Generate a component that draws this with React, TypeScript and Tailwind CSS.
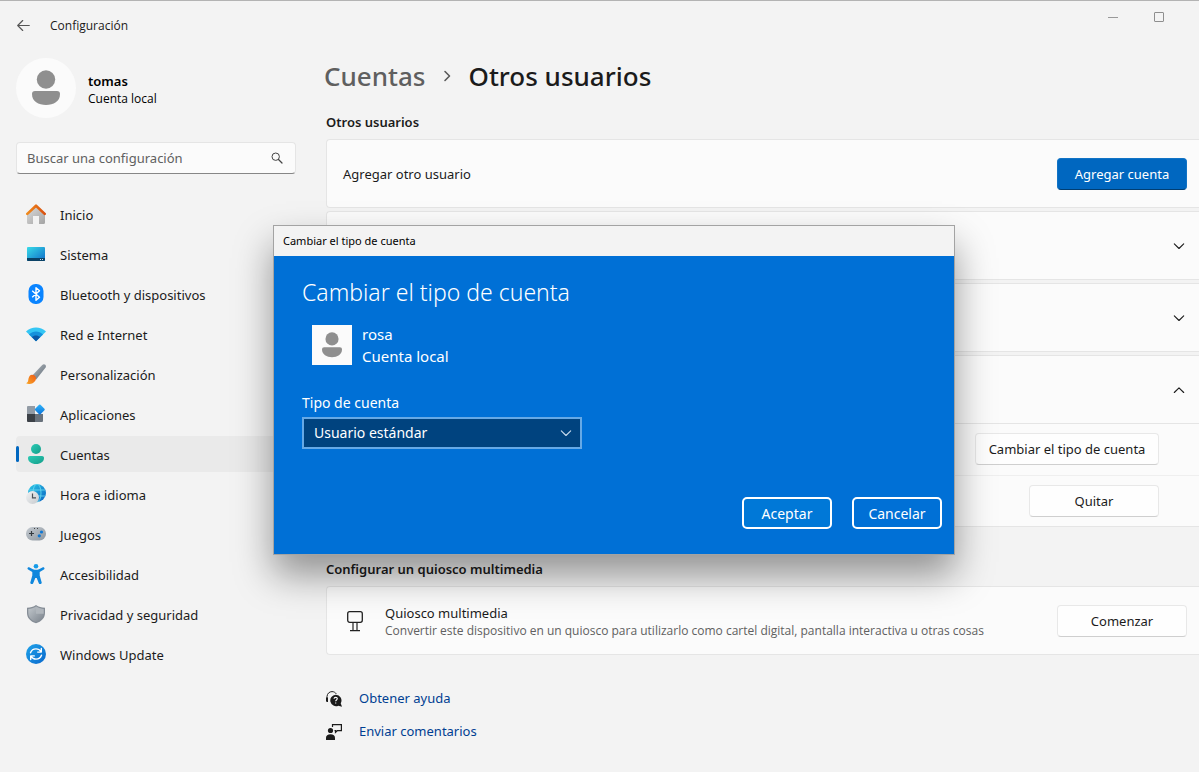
import { useState, type ReactNode } from 'react';

const svgProps = { width: 20, height: 20, viewBox: '0 0 20 20', fill: 'none', 'aria-hidden': true } as const;

function HomeIcon() {
  return (
    <svg {...svgProps}>
      <defs>
        <linearGradient id="homeWall" x1="0" y1="0" x2="1" y2="1"><stop stopColor="#dcdcdc" /><stop offset="1" stopColor="#a3a3a3" /></linearGradient>
        <linearGradient id="homeRoof" x1="0" y1="0" x2="1" y2="0"><stop stopColor="#f08a1c" /><stop offset="1" stopColor="#d9500f" /></linearGradient>
      </defs>
      <path d="M1 9.500 10 2l9 7.500V18.500a1.500 1.500 0 0 1-1.500 1.500H13v-8H7v8H2.500A1.500 1.500 0 0 1 1 18.500Z" fill="url(#homeWall)" />
      <path d="M1.300 9.900 10 1.700l8.700 8.200" stroke="url(#homeRoof)" strokeWidth="2.600" strokeLinecap="round" strokeLinejoin="round" />
    </svg>
  );
}

function SystemIcon() {
  return (
    <svg {...svgProps}>
      <defs><linearGradient id="screen" x1="0" y1="0" x2="1" y2="1"><stop stopColor="#38dbe8" /><stop offset="1" stopColor="#0f6cc8" /></linearGradient></defs>
      <rect x="1" y="3" width="18" height="14" rx="1" fill="url(#screen)" />
      <path d="M1 14h18v2a1 1 0 0 1-1 1H2a1 1 0 0 1-1-1Z" fill="#0b4266" />
      <path d="M14 15.500h1M16 15.500h1" stroke="#cde" strokeWidth="1" />
    </svg>
  );
}

function BluetoothIcon() {
  return (
    <svg {...svgProps}>
      <rect x="2.500" y="0" width="15" height="20" rx="7" fill="#0a84ff" />
      <path d="m6.200 6.700 7.300 6.500L10 16.300V3.700l3.500 3.100-7.300 6.500" stroke="#fff" strokeWidth="1.400" strokeLinejoin="round" />
    </svg>
  );
}

function WifiIcon() {
  return (
    <svg {...svgProps}>
      <path d="M0 7.500C5.500 2 14.500 2 20 7.500L10 17.200Z" fill="#34c6f4" />
      <path d="M3 10.400c4-3.900 10-3.900 14 0l-7 6.800Z" fill="#1591dc" />
      <path d="M5.800 13.100c2.400-2.300 6-2.300 8.400 0L10 17.200Z" fill="#0b57a6" />
    </svg>
  );
}

function BrushIcon() {
  return (
    <svg {...svgProps}>
      <defs>
        <linearGradient id="handle" x1="0" y1="0" x2="1" y2="1"><stop stopColor="#b5bcc2" /><stop offset="1" stopColor="#5f6a75" /></linearGradient>
        <linearGradient id="bristle" x1="0" y1="1" x2="1" y2="0"><stop stopColor="#f9a825" /><stop offset="1" stopColor="#ee5a17" /></linearGradient>
      </defs>
      <path d="M6.300 11.500 16 1.200C18-.800 20.900 1 19.600 3.400L10.200 15.500Z" fill="url(#handle)" />
      <path d="M6 10.700c2.500 0 4.300 1.800 4 4.100-.600 4.100-5.700 6.600-9.900 4.400 2.500-.900 1.900-2.600 2.500-4.900.500-2.100 1.500-3.600 3.400-3.600Z" fill="url(#bristle)" />
    </svg>
  );
}

function AppsIcon() {
  return (
    <svg {...svgProps}>
      <defs><linearGradient id="tile" x1="0" y1="0" x2="1" y2="1"><stop stopColor="#31b6fa" /><stop offset="1" stopColor="#0a70d8" /></linearGradient></defs>
      <path d="M2 2h7v8H1V3a1 1 0 0 1 1-1Z" fill="#929ba5" />
      <path d="M1 10h8v8H2a1 1 0 0 1-1-1Z" fill="#3c4147" />
      <path d="M9 10h8v7a1 1 0 0 1-1 1H9Z" fill="#69727c" />
      <rect x="10" y="1.700" width="7.600" height="7.600" rx="1" transform="rotate(45 13.800 5.500)" fill="url(#tile)" />
    </svg>
  );
}

function AccountIcon() {
  return (
    <svg {...svgProps}>
      <defs><linearGradient id="person" x1="0" y1="0" x2="1" y2="1"><stop stopColor="#2ccbb5" /><stop offset="1" stopColor="#149e8a" /></linearGradient></defs>
      <circle cx="10" cy="5" r="5" fill="url(#person)" />
      <path d="M4 12h12c1.200 0 2 .8 2 2 0 3.500-3.300 6-8 6s-8-2.500-8-6c0-1.200.8-2 2-2Z" fill="url(#person)" />
    </svg>
  );
}

function TimeIcon() {
  return (
    <svg {...svgProps}>
      <defs>
        <linearGradient id="globe" x1="0" y1="0" x2="1" y2="1"><stop stopColor="#2ecbe8" /><stop offset="1" stopColor="#0a63c2" /></linearGradient>
        <linearGradient id="clock" x1="0" y1="0" x2="1" y2="1"><stop stopColor="#f2f3f4" /><stop offset="1" stopColor="#c6cace" /></linearGradient>
      </defs>
      <circle cx="11" cy="9" r="9" fill="url(#globe)" />
      <path d="M3 6h16M3 12h16" stroke="#6fe0f2" strokeWidth=".8" />
      <ellipse cx="11" cy="9" rx="4" ry="9" stroke="#6fe0f2" strokeWidth=".8" />
      <circle cx="6.500" cy="13.500" r="6.500" fill="url(#clock)" />
      <path d="M6.500 9.500v4.300H10" stroke="#4a5057" strokeWidth="1.200" />
    </svg>
  );
}

function GamesIcon() {
  return (
    <svg {...svgProps}>
      <defs><linearGradient id="pad" x1="0" y1="0" x2="1" y2="1"><stop stopColor="#c4cad0" /><stop offset="1" stopColor="#8d969f" /></linearGradient></defs>
      <rect x="0" y="3" width="20" height="13.500" rx="6.500" fill="url(#pad)" />
      <path d="M5.500 7v5M3 9.500h5" stroke="#343a40" strokeWidth="1.200" />
      <circle cx="15.500" cy="8" r="1.600" fill="#0f78d4" />
      <circle cx="13.300" cy="11.800" r="1.600" fill="#0f78d4" />
      <path d="M8 4.500h1M11 4.500h1" stroke="#444" />
    </svg>
  );
}

function AccessibilityIcon() {
  return (
    <svg {...svgProps}>
      <circle cx="10" cy="2.300" r="2.300" fill="#159be8" />
      <path d="M3.100 3.300 7 5.200c2 .8 4 .8 6 0l3.900-1.900c1.500-.6 2.200 1.600 1 2.300L13.700 8v3.500l2 7c.3 1.700-2.300 2.300-2.900.7L10.700 14H9.300l-2.100 5.200c-.6 1.600-3.200 1-2.900-.7l2-7V8L2.100 5.600c-1.200-.7-.5-2.900 1-2.300Z" fill="#0f87dd" />
    </svg>
  );
}

function ShieldIcon() {
  return (
    <svg {...svgProps}>
      <defs><linearGradient id="shield" x1="0" y1="0" x2="1" y2="1"><stop stopColor="#c2c8cd" /><stop offset="1" stopColor="#7b838c" /></linearGradient></defs>
      <path d="M10 1c2.500 1.800 5.500 2.700 9 2.700V9c0 5-3.500 8.500-9 10.300C4.500 17.500 1 14 1 9V3.700C4.500 3.700 7.500 2.800 10 1Z" fill="#858d96" />
      <path d="M10 2.500c2.300 1.500 5 2.200 7.700 2.400V9c0 4.200-2.900 7.300-7.700 8.900C5.200 16.300 2.300 13.200 2.300 9V4.900C5 4.700 7.700 4 10 2.500Z" fill="url(#shield)" />
      <path d="M10 2.500c2.300 1.500 5 2.200 7.700 2.400v4.900H10Z" fill="#b0b6bc" />
    </svg>
  );
}

function UpdateIcon() {
  return (
    <svg {...svgProps}>
      <defs><linearGradient id="update" x1="0" y1="0" x2="1" y2="1"><stop stopColor="#1fa4ea" /><stop offset="1" stopColor="#0a68cc" /></linearGradient></defs>
      <circle cx="10" cy="10" r="10" fill="url(#update)" />
      <path d="M4.500 8.800C5.500 6 7.500 4.900 10 4.900c2.200 0 3.900 1 5 2.800M15.300 4.500v3.600h-3.600M15.500 11.200c-1 2.800-3 3.900-5.500 3.900-2.200 0-3.900-1-5-2.800M4.700 15.500v-3.600h3.600" stroke="#fff" strokeWidth="1.400" strokeLinecap="round" strokeLinejoin="round" />
    </svg>
  );
}

function UserGlyph({ className }: { className: string }) {
  return (
    <svg viewBox="0 0 28 36" className={className} aria-hidden="true">
      <circle cx="14" cy="9.500" r="9.200" fill="#8f8f8f" />
      <path d="M3 21h22a3 3 0 0 1 3 3c0 7.500-6.500 11-14 11S0 31.500 0 24a3 3 0 0 1 3-3Z" fill="#8f8f8f" />
    </svg>
  );
}

function Chevron({ up = false }: { up?: boolean }) {
  return (
    <svg width="12" height="12" viewBox="0 0 12 12" fill="none" aria-hidden="true">
      <path d={up ? 'm1.300 8.500 4.700-4.700 4.700 4.700' : 'm1.300 3.800 4.700 4.700 4.700-4.700'} stroke="currentColor" strokeWidth="1.100" strokeLinecap="round" strokeLinejoin="round" />
    </svg>
  );
}

const navItems: { label: string; icon: ReactNode }[] = [
  { label: 'Inicio', icon: <HomeIcon /> },
  { label: 'Sistema', icon: <SystemIcon /> },
  { label: 'Bluetooth y dispositivos', icon: <BluetoothIcon /> },
  { label: 'Red e Internet', icon: <WifiIcon /> },
  { label: 'Personalización', icon: <BrushIcon /> },
  { label: 'Aplicaciones', icon: <AppsIcon /> },
  { label: 'Cuentas', icon: <AccountIcon /> },
  { label: 'Hora e idioma', icon: <TimeIcon /> },
  { label: 'Juegos', icon: <GamesIcon /> },
  { label: 'Accesibilidad', icon: <AccessibilityIcon /> },
  { label: 'Privacidad y seguridad', icon: <ShieldIcon /> },
  { label: 'Windows Update', icon: <UpdateIcon /> },
];

const caption = "font-['Open_Sans','Noto_Sans',sans-serif] text-xs";

function Sidebar() {
  return (
    <aside className="w-[296px] shrink-0 pl-4">
      <div className="flex h-[60px] items-center gap-3">
        <div className="flex size-[60px] items-center justify-center rounded-full bg-[#fbfbfb]">
          <UserGlyph className="h-9 w-7" />
        </div>
        <div className="pt-1">
          <p className="text-[13px] leading-[18px] font-semibold text-black">tomas</p>
          <p className={`leading-[18px] text-black ${caption}`}>Cuenta local</p>
        </div>
      </div>
      <div className="mt-6 flex h-8 items-center rounded border border-[#e5e5e5] border-b-[#868686] bg-[#fbfbfb] pr-3 pl-2.5">
        <input
          type="text"
          aria-label="Buscar una configuración"
          placeholder="Buscar una configuración"
          className="min-w-0 flex-1 bg-transparent pt-0.5 text-[13px] outline-none placeholder:text-[#606060]"
        />
        <svg width="12" height="12" viewBox="0 0 12 12" fill="none" aria-hidden="true">
          <circle cx="4.700" cy="4.700" r="3.700" stroke="#444" strokeWidth="1" />
          <path d="m7.500 7.500 3.500 3.500" stroke="#444" strokeWidth="1.200" strokeLinecap="round" />
        </svg>
      </div>
      <nav className="mt-[22px] flex flex-col gap-1">
        {navItems.map(({ label, icon }) => {
          const active = label === 'Cuentas';
          return (
            <a
              key={label}
              href="#"
              aria-current={active ? 'page' : undefined}
              className={`relative flex h-9 items-center gap-3.5 rounded px-2.5 text-[13px] text-[#1b1b1b] ${active ? 'bg-[#eaeaea]' : ''}`}
            >
              {active && <span className="absolute top-2.5 left-0 h-4 w-[3px] rounded-full bg-[#0067c0]" />}
              {icon}
              <span className="pt-1">{label}</span>
            </a>
          );
        })}
      </nav>
    </aside>
  );
}

const card = 'border border-r-0 border-[#e5e5e5] bg-[#fbfbfb] rounded-l';
const button = 'flex h-8 items-center justify-center rounded border border-[#e8e8e8] border-b-[#cfcfcf] bg-[#fefefe] pt-0.5 text-[13px]';

function ExpanderCard({ label }: { label: string }) {
  return (
    <button type="button" aria-label={label} className={`flex h-[69px] w-full items-center justify-end pr-3.5 ${card}`}>
      <Chevron />
    </button>
  );
}

function Content() {
  return (
    <main className="min-w-0 flex-1 pl-[30px] text-[#1b1b1b]">
      <h1 className="-ml-0.5 flex h-9 items-center gap-4 text-[26px] font-medium">
        <a href="#" className="text-[#5f5f5f]">Cuentas</a>
        <svg width="11" height="14" viewBox="0 0 11 14" fill="none" aria-hidden="true">
          <path d="m3 2.500 4.500 4.500L3 11.500" stroke="#5a5a5a" strokeWidth="1.600" strokeLinecap="round" strokeLinejoin="round" />
        </svg>
        <span>Otros usuarios</span>
      </h1>
      <h2 className="mt-[18px] text-[13px] leading-5 font-semibold">Otros usuarios</h2>
      <div className="mt-[7px] flex flex-col gap-[3px]">
        <section className={`flex h-[69px] items-center justify-between pr-3 pl-4 ${card}`}>
          <span className="pt-0.5 text-[13px]">Agregar otro usuario</span>
          <button type="button" className="flex h-8 w-[130px] items-center justify-center rounded border border-[#1173c5] border-b-[#003e73] bg-[#0067c0] pt-0.5 text-[13px] text-white">
            Agregar cuenta
          </button>
        </section>
        <ExpanderCard label="Mostrar cuenta" />
        <ExpanderCard label="Mostrar cuenta" />
        <section className={card}>
          <button type="button" aria-label="Ocultar cuenta" className="flex h-[67px] w-full items-center justify-end pr-3.5">
            <Chevron up />
          </button>
          <div className="flex h-[52px] items-center justify-end border-t border-[#e5e5e5] pr-10 pb-0.5">
            <button type="button" className={`w-[184px] ${button}`}>Cambiar el tipo de cuenta</button>
          </div>
          <div className="flex h-[51px] items-center justify-end border-t border-[#efefef] pr-10">
            <button type="button" className={`w-[130px] ${button}`}>Quitar</button>
          </div>
        </section>
      </div>
      <h2 className="mt-8 text-[13px] leading-5 font-semibold">Configurar un quiosco multimedia</h2>
      <section className={`mt-[7px] flex h-[69px] items-center pr-3 pl-[18px] ${card}`}>
        <svg width="20" height="22" viewBox="0 0 20 22" fill="none" aria-hidden="true" className="shrink-0">
          <rect x="2.700" y="1.700" width="14.600" height="10.600" rx="2" stroke="#222" strokeWidth="1.300" />
          <path d="M8 12.500v8M12 12.500v8M5 20.600h10" stroke="#222" strokeWidth="1.200" />
        </svg>
        <div className="ml-5 min-w-0 flex-1 pt-0.5">
          <p className="text-[13px] leading-[18px]">Quiosco multimedia</p>
          <p className={`leading-[18px] text-[#606060] ${caption}`}>
            Convertir este dispositivo en un quiosco para utilizarlo como cartel digital, pantalla interactiva u otras cosas
          </p>
        </div>
        <button type="button" className={`w-[130px] shrink-0 ${button}`}>Comenzar</button>
      </section>
      <div className="mt-[27px] flex flex-col items-start text-[13px] text-[#003e92]">
        <a href="#" className="flex h-[33px] items-center gap-[17px]">
          <svg width="16" height="16" viewBox="0 0 16 16" aria-hidden="true">
            <path d="M1 8V5.500C1.200 2.500 3.500.6 6 .6c2 0 3.300.9 4.300 2.300" stroke="#222" fill="none" strokeWidth="1" />
            <path d="M0 6.500h2V11H1.200A1.200 1.200 0 0 1 0 9.800Z" fill="#1b1b1b" />
            <path d="M9.700 3.800a5.600 5.600 0 0 1 5 8.400L16 15.800l-3.700-1.100A5.700 5.700 0 1 1 9.700 3.800Z" fill="#1b1b1b" />
            <path d="M8 7.800c.2-2 3.400-1.800 3.300 0-.1 1.200-1.600 1.200-1.600 2.400M9.700 11.400v1" stroke="#fff" fill="none" strokeWidth="1.100" />
          </svg>
          Obtener ayuda
        </a>
        <a href="#" className="flex h-[33px] items-center gap-[17px]">
          <svg width="16" height="16" viewBox="0 0 16 16" aria-hidden="true">
            <circle cx="4.500" cy="6.500" r="2.600" fill="#1b1b1b" />
            <path d="M0 16v-2.300C0 11.500 1.700 10.300 4.500 10.300S9 11.500 9 13.700V16Z" fill="#1b1b1b" />
            <path d="M6.500 3V.600h8.900v6.100h-4.200L9.500 8.300V6.700H8.500" stroke="#1b1b1b" fill="none" strokeWidth="1.200" />
          </svg>
          Enviar comentarios
        </a>
      </div>
    </main>
  );
}

function AccountTypeDialog() {
  const [type, setType] = useState('standard');
  const action = 'h-8 w-[90px] rounded-[5px] border-2 border-white pt-0.5 text-sm leading-5 text-white';
  return (
    <div
      role="dialog"
      aria-labelledby="dialog-title"
      className="absolute top-[224px] left-[273px] w-[682px] border border-[#a3a3a3] bg-[#0070d6] text-white shadow-[0_20px_36px_rgba(0,0,0,0.4)]"
    >
      <div className="flex h-[30px] items-center bg-[#f3f3f3] pl-[9px] text-[11px] text-black">Cambiar el tipo de cuenta</div>
      <div className="flex h-[298px] flex-col pr-3 pb-[25px] pl-7">
        <h2 id="dialog-title" className="mt-5 text-[23px] leading-8 font-light">Cambiar el tipo de cuenta</h2>
        <div className="mt-[17px] ml-2.5 flex items-center gap-2.5">
          <div className="flex size-10 items-center justify-center bg-[#fbfbfb]">
            <UserGlyph className="h-[26px] w-5" />
          </div>
          <p className="-my-1 text-[15px] leading-[22px]">rosa<br />Cuenta local</p>
        </div>
        <label htmlFor="account-type" className="mt-7 text-sm leading-5">Tipo de cuenta</label>
        <div className="relative mt-1 w-[280px]">
          <select
            id="account-type"
            value={type}
            onChange={(e) => setType(e.target.value)}
            className="h-8 w-full appearance-none border-2 border-[#66a9e6] bg-[#00437f] pl-2.5 text-sm text-white outline-none"
          >
            <option value="standard">Usuario estándar</option>
            <option value="admin">Administrador</option>
          </select>
          <span className="pointer-events-none absolute top-2.5 right-2.5 text-[#c9dcee]"><Chevron /></span>
        </div>
        <div className="mt-auto flex justify-end gap-5">
          <button type="button" className={`bg-[#0078d7] ${action}`}>Aceptar</button>
          <button type="button" className={action}>Cancelar</button>
        </div>
      </div>
    </div>
  );
}

export default function App() {
  return (
    <div className="relative min-h-screen overflow-hidden border-t border-[#b3b3b3] bg-[#f3f3f3] font-['Noto_Sans','Segoe_UI',sans-serif] text-[#1b1b1b]">
      <header className="flex h-[49px] items-center pr-[35px] pl-[17px]">
        <button type="button" aria-label="Atrás">
          <svg width="13" height="12" viewBox="0 0 13 12" fill="none" aria-hidden="true">
            <path d="M12.300 5.500H.900M5.700.500l-5 5 5 5" stroke="#555" strokeWidth="1.100" strokeLinecap="round" strokeLinejoin="round" />
          </svg>
        </button>
        <span className={`ml-5 ${caption}`}>Configuración</span>
        <div className="mb-[17px] ml-auto flex items-center gap-9">
          <button type="button" aria-label="Minimizar" className="h-px w-2.5 bg-[#999]" />
          <button type="button" aria-label="Maximizar" className="size-2.5 rounded-[1px] border border-[#8e8e8e]" />
        </div>
      </header>
      <div className="flex pt-2">
        <Sidebar />
        <Content />
      </div>
      <AccountTypeDialog />
    </div>
  );
}
